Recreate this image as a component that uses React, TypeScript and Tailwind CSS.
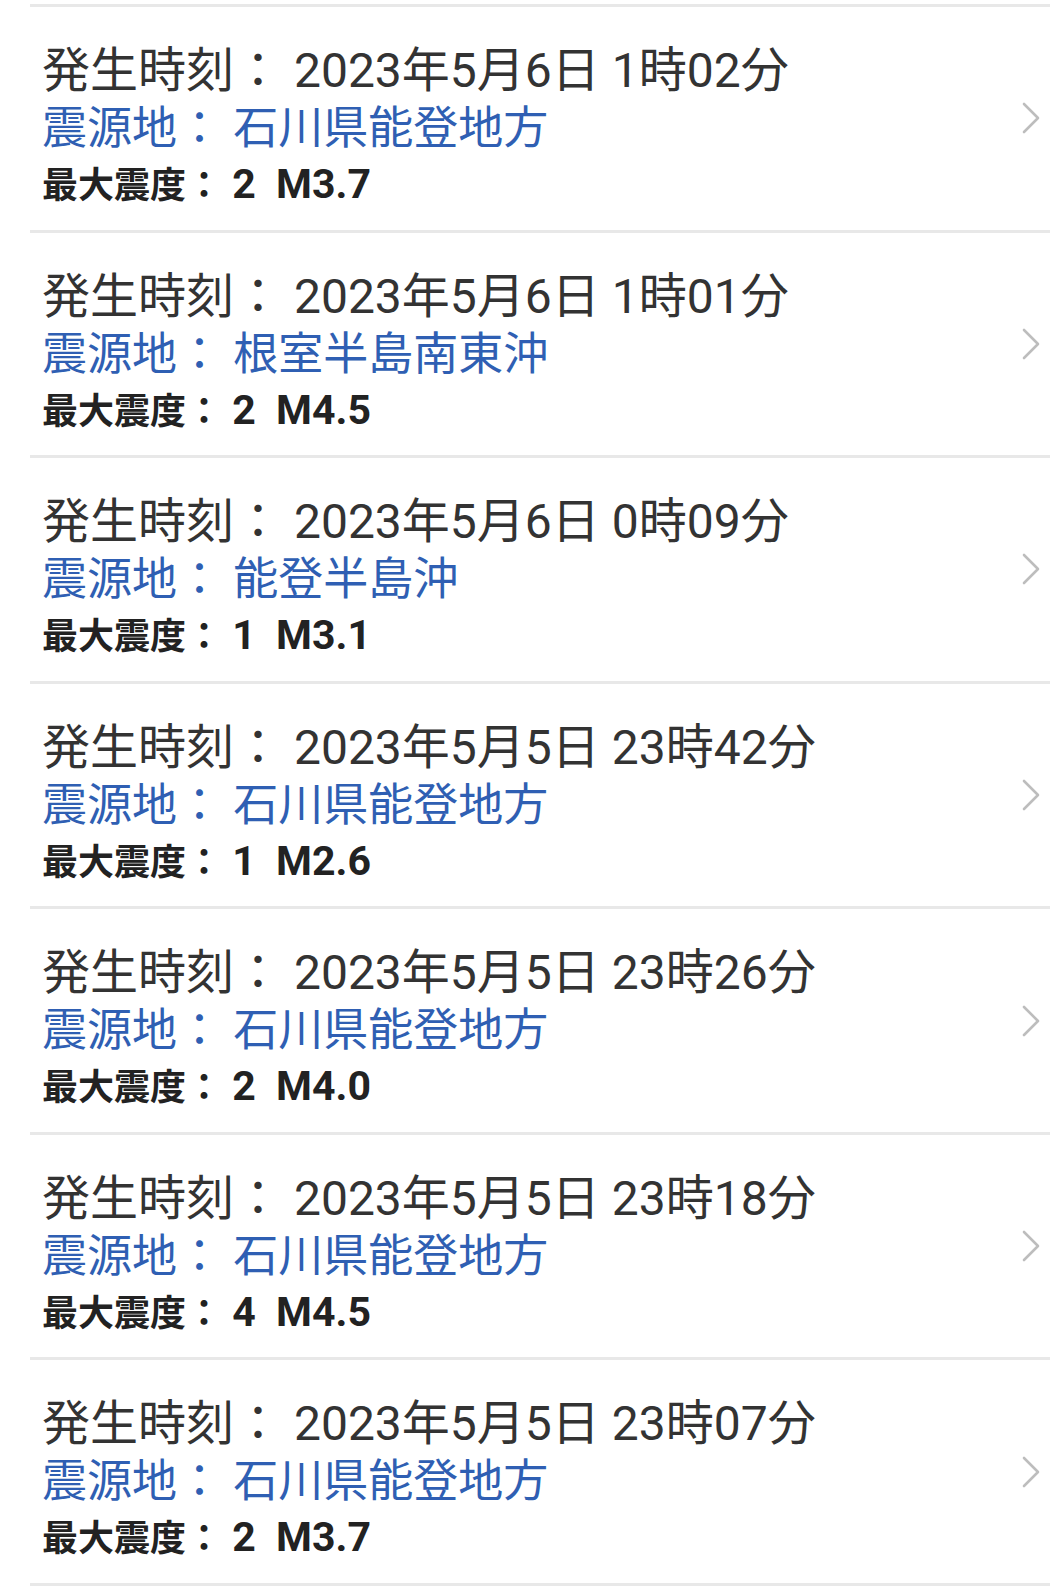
import React from "react";

type Quake = {
    time: string;
    place: string;
    shindo: string;
    mag: string;
};

const quakes: Quake[] = [
    { time: "2023年5月6日 1時02分", place: "石川県能登地方", shindo: "2", mag: "3.7" },
    { time: "2023年5月6日 1時01分", place: "根室半島南東沖", shindo: "2", mag: "4.5" },
    { time: "2023年5月6日 0時09分", place: "能登半島沖", shindo: "1", mag: "3.1" },
    { time: "2023年5月5日 23時42分", place: "石川県能登地方", shindo: "1", mag: "2.6" },
    { time: "2023年5月5日 23時26分", place: "石川県能登地方", shindo: "2", mag: "4.0" },
    { time: "2023年5月5日 23時18分", place: "石川県能登地方", shindo: "4", mag: "4.5" },
    { time: "2023年5月5日 23時07分", place: "石川県能登地方", shindo: "2", mag: "3.7" },
];

function Mixed(props: { text: string; latin: string }): React.JSX.Element {
    const parts = props.text.split(/([\x00-\x7f\u00a0]+)/).filter((p) => p.length > 0);
    return (
        <>
            {parts.map((p, i) =>
                /^[\x00-\x7f\u00a0]+$/.test(p) ? (
                    <span key={i} className={`font-['Roboto',sans-serif] leading-none whitespace-pre ${props.latin}`}>
                        {p}
                    </span>
                ) : (
                    <span key={i}>{p}</span>
                )
            )}
        </>
    );
}

function Chevron(): React.JSX.Element {
    return (
        <svg width="18" height="32" viewBox="0 0 18 32" fill="none" className="mr-[10px] shrink-0">
            <polyline points="2,2 16,16 2,30" stroke="#bdbdbd" strokeWidth="2.6" strokeLinecap="round" strokeLinejoin="round" />
        </svg>
    );
}

function QuakeRow(props: { quake: Quake }): React.JSX.Element {
    const q = props.quake;
    return (
        <li className="h-[225.57px] border-t-[3px] border-[#e8e8e8] flex justify-between items-center">
            <div className="self-start pl-[12px] pt-[30px] font-['Noto_Sans_CJK_JP',sans-serif]">
                <div className="text-[48px] leading-[58px] text-[#333333] whitespace-nowrap">
                    <Mixed text={`発生時刻： ${q.time}`} latin="text-[48px]" />
                </div>
                <div className="text-[45px] leading-[59px] text-[#2f5fb3] whitespace-nowrap">
                    <Mixed text={`震源地： ${q.place}`} latin="text-[45px]" />
                </div>
                <div className="text-[36px] leading-[54px] mt-[1px] font-bold text-[#222222] whitespace-nowrap">
                    <Mixed text={`最大震度：${"\u00a0"}${q.shindo}\u00a0\u00a0M${q.mag}`} latin="text-[41px]" />
                </div>
            </div>
            <Chevron />
        </li>
    );
}

export default function App(): React.JSX.Element {
    return (
        <div className="w-full h-[1586px] bg-white pt-[4px] pl-[30px] pr-[9px] overflow-hidden">
            <ul>
                {quakes.map((q, i) => (
                    <QuakeRow key={i} quake={q} />
                ))}
            </ul>
            <div className="h-[3px] bg-[#e8e8e8]" />
        </div>
    );
}
